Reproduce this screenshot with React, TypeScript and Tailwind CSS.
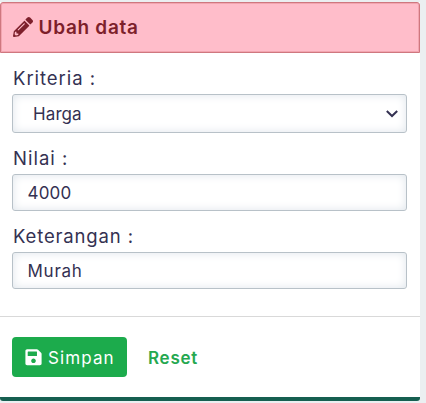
import type { ReactNode } from "react";
import { FaPencilAlt, FaSave } from "react-icons/fa";

const field =
  "block w-full appearance-none rounded-[3px] border border-[#b8c1c8] bg-white text-[17px] leading-6 text-[#343152] outline-none shadow-[inset_0_0_10px_#dfe5eb]";

function Label({ htmlFor, children, className }: { htmlFor: string; children: ReactNode; className: string }) {
  return (
    <label htmlFor={htmlFor} className={`block h-6 w-fit whitespace-nowrap pl-px text-[18.5px] leading-[25px] ${className}`}>
      {children}
    </label>
  );
}

export default function App() {
  return (
    <div className="h-[403px] w-[426px] overflow-hidden bg-[#ebeff1] pt-0.5 font-['Inter','Noto_Sans',sans-serif] text-[#343152]">
      <form className="flex h-[399px] w-[420px] flex-col rounded-b-[3px] border-b-4 border-[#165f50] bg-white">
        <header className="flex h-[51px] shrink-0 items-center rounded-t-[3px] border border-[#cf777f] bg-[#ffbdca] pl-[11.5px] text-[#7d1f2b] shadow-[inset_0_0_0_1px_#f2a5b0]">
          <FaPencilAlt className="mb-0.5 size-5" />
          <h1 className="ml-1.5 text-[19px] font-semibold leading-6 tracking-[0.7px]">Ubah data</h1>
        </header>
        <div className="px-[13px] pl-3 pt-[13px]">
          <Label htmlFor="kriteria" className="tracking-[0.95px]">Kriteria :</Label>
          <div className="relative mt-1">
            <select id="kriteria" className={`${field} h-[39px] pl-5 tracking-[0.1px]`}>
              <option>Harga</option>
            </select>
            <svg className="pointer-events-none absolute right-[9px] top-4 h-2 w-3" viewBox="0 0 12 8" fill="none" stroke="#343152" strokeWidth="2">
              <path d="M0.8 1 L6 6 L11.2 1" />
            </svg>
          </div>
          <Label htmlFor="nilai" className="mt-[13px] tracking-[1px]">Nilai :</Label>
          <input id="nilai" className={`${field} mt-1 h-[37px] pl-[14.5px] tracking-[0.2px]`} defaultValue="4000" />
          <Label htmlFor="keterangan" className="mt-[13px] tracking-[0.85px]">Keterangan :</Label>
          <input id="keterangan" className={`${field} mt-1 h-[37px] pl-[14.5px] tracking-[0.75px]`} defaultValue="Murah" />
        </div>
        <footer className="mt-[27px] flex border-t border-[#d9d9d9] pl-3 pt-5">
          <button type="submit" className="flex h-10 w-[115px] items-center rounded-[4px] bg-[#1cab4c] pl-[13px] pt-px text-[17px] text-white">
            <FaSave className="h-[18.5px] w-[17px]" />
            <span className="ml-1.5 pt-0.5 tracking-[1.1px]">Simpan</span>
          </button>
          <button type="reset" className="ml-[21px] h-10 pt-[3px] text-[17px] font-semibold tracking-[0.75px] text-[#25a850]">Reset</button>
        </footer>
      </form>
    </div>
  );
}
